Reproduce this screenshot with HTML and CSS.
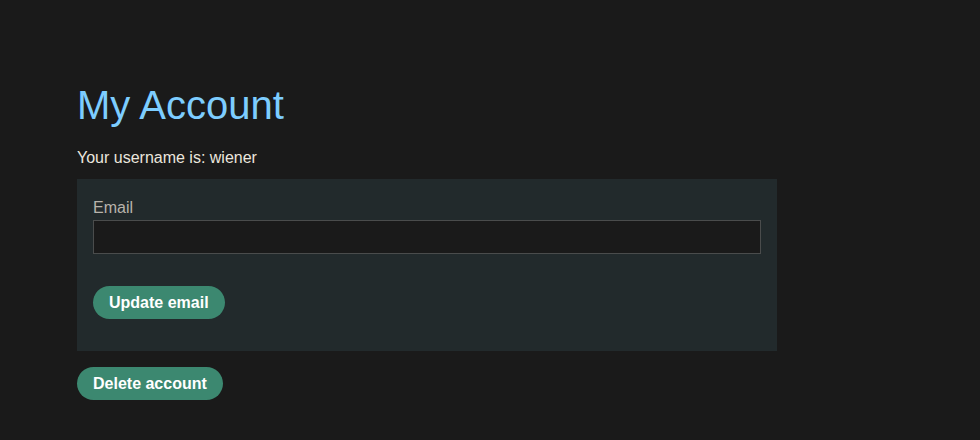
FILE: index.html
```html
<!DOCTYPE html>
<html>
<head>
<meta charset="utf-8">
<link rel="stylesheet" href="styles.css">
</head>
<body>
<main class="page">
  <h1 class="title">My Account</h1>
  <p class="username">Your username is: wiener</p>
  <form class="panel">
    <label class="label" for="email">Email</label>
    <input class="input" id="email" type="email">
    <button class="btn btn-update" type="button">Update email</button>
  </form>
  <button class="btn" type="button">Delete account</button>
</main>
</body>
</html>
```
FILE: styles.css
```css
html, body {
  margin: 0;
  padding: 0;
  background: #1a1a1a;
  font-family: "Liberation Sans", Arial, sans-serif;
}
.page {
  padding: 81px 0 0 77px;
  width: 700px;
  display: flex;
  flex-direction: column;
  align-items: flex-start;
}
.title {
  margin: 0;
  font-size: 40px;
  font-weight: normal;
  line-height: 48px;
  color: #7dcdff;
}
.username {
  margin: 19px 0 0;
  font-size: 16px;
  line-height: 20px;
  color: #ebe6de;
}
.panel {
  margin-top: 11px;
  box-sizing: border-box;
  width: 700px;
  background: #222a2c;
  padding: 18px 16px 32px;
  display: flex;
  flex-direction: column;
  align-items: flex-start;
}
.label {
  font-size: 16px;
  line-height: 21px;
  color: #b8b3ab;
}
.input {
  box-sizing: border-box;
  width: 668px;
  height: 34px;
  margin: 2px 0 0;
  background: #1a1a1a;
  border: 1px solid #4a4c4c;
  color: #fff;
  font-size: 16px;
}
.btn {
  border: none;
  border-radius: 17px;
  background: #3c8870;
  color: #fff;
  font-family: "Liberation Sans", Arial, sans-serif;
  font-weight: bold;
  font-size: 16px;
  height: 33px;
  padding: 0 16px;
  margin: 16px 0 0;
}
.btn-update {
  margin-top: 32px;
}
```
